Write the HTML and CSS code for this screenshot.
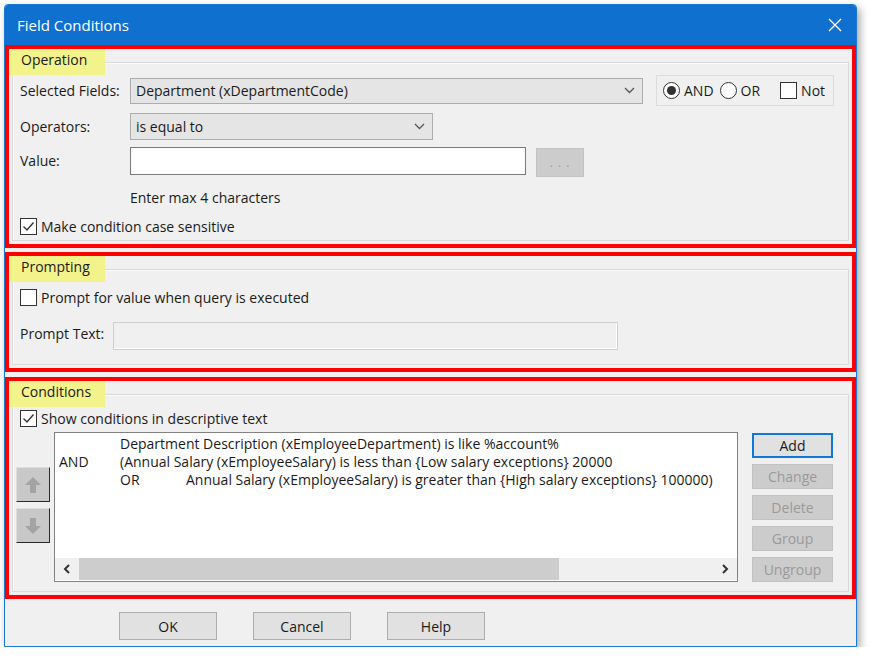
FILE: index.html
```html
<!DOCTYPE html>
<html lang="en">
<head>
  <meta charset="UTF-8" />
  <title>Field Conditions</title>
  <link rel="stylesheet" href="styles.css">
</head>
<body>
  <div class="dialog">
    <div class="titlebar">
      <span>Field Conditions</span>
      <svg class="close" width="14" height="14" viewBox="0 0 14 14">
        <path d="M1 1 L13 13 M13 1 L1 13" stroke="#fff" stroke-width="1.4" fill="none"/>
      </svg>
    </div>

    <!-- Operation -->
    <div class="mark mark-op">
      <fieldset class="group">
        <legend>Operation</legend>
        <div class="row row-fields">
          <span class="lbl">Selected Fields:</span>
          <div class="combo combo-fields">
            <span>Department (xDepartmentCode)</span>
            <svg width="11" height="7" viewBox="0 0 11 7"><polyline points="1,1 5.5,5.5 10,1" fill="none" stroke="#555" stroke-width="1.3"/></svg>
          </div>
          <div class="logic">
            <span class="radio on"></span><span class="opt">AND</span>
            <span class="radio"></span><span class="opt">OR</span>
            <span class="check not"></span><span class="opt">Not</span>
          </div>
        </div>
        <div class="row row-ops">
          <span class="lbl">Operators:</span>
          <div class="combo combo-ops">
            <span>is equal to</span>
            <svg width="11" height="7" viewBox="0 0 11 7"><polyline points="1,1 5.5,5.5 10,1" fill="none" stroke="#555" stroke-width="1.3"/></svg>
          </div>
        </div>
        <div class="row row-value">
          <span class="lbl">Value:</span>
          <div class="input input-value"></div>
          <button class="btn-dots">. . .</button>
        </div>
        <div class="hint">Enter max 4 characters</div>
        <div class="row row-check row-case">
          <span class="check">
            <svg width="15" height="15" viewBox="0 0 15 15"><polyline points="2.5,7.5 6,11 12.5,3.5" fill="none" stroke="#333" stroke-width="1.4"/></svg>
          </span>
          <span>Make condition case sensitive</span>
        </div>
      </fieldset>
    </div>

    <!-- Prompting -->
    <div class="mark mark-prompt">
      <fieldset class="group">
        <legend>Prompting</legend>
        <div class="row row-check row-ask">
          <span class="check"></span>
          <span>Prompt for value when query is executed</span>
        </div>
        <div class="row row-prompt">
          <span class="lbl lbl-short">Prompt Text:</span>
          <div class="input input-prompt"></div>
        </div>
      </fieldset>
    </div>

    <!-- Conditions -->
    <div class="mark mark-cond">
      <fieldset class="group">
        <legend>Conditions</legend>
        <div class="row row-check row-show">
          <span class="check">
            <svg width="15" height="15" viewBox="0 0 15 15"><polyline points="2.5,7.5 6,11 12.5,3.5" fill="none" stroke="#333" stroke-width="1.4"/></svg>
          </span>
          <span>Show conditions in descriptive text</span>
        </div>
        <div class="cond-area">
          <div class="movers">
            <button class="mover">
              <svg width="20" height="20" viewBox="0 0 20 20"><path d="M10 2 L18 10 L13 10 L13 18 L7 18 L7 10 L2 10 Z" fill="#a3a3a3"/></svg>
            </button>
            <button class="mover">
              <svg width="20" height="20" viewBox="0 0 20 20"><path d="M10 18 L18 10 L13 10 L13 2 L7 2 L7 10 L2 10 Z" fill="#a3a3a3"/></svg>
            </button>
          </div>
          <div class="list">
            <div class="lines">
              <div class="line"><span class="tab"></span><span>Department Description (xEmployeeDepartment) is like %account%</span></div>
              <div class="line"><span class="tab">AND</span><span>(Annual Salary (xEmployeeSalary) is less than {Low salary exceptions} 20000</span></div>
              <div class="line"><span class="tab"></span><span class="tab tab2">OR</span><span>Annual Salary (xEmployeeSalary) is greater than {High salary exceptions} 100000)</span></div>
            </div>
            <div class="hscroll">
              <span class="arrow">
                <svg width="8" height="10" viewBox="0 0 8 10"><polyline points="6,1 2,5 6,9" fill="none" stroke="#333" stroke-width="2"/></svg>
              </span>
              <div class="thumb"></div>
              <span class="spacer"></span>
              <span class="arrow">
                <svg width="8" height="10" viewBox="0 0 8 10"><polyline points="2,1 6,5 2,9" fill="none" stroke="#333" stroke-width="2"/></svg>
              </span>
            </div>
          </div>
          <div class="side">
            <button class="side-btn focus">Add</button>
            <button class="side-btn off">Change</button>
            <button class="side-btn off">Delete</button>
            <button class="side-btn off">Group</button>
            <button class="side-btn off">Ungroup</button>
          </div>
        </div>
      </fieldset>
    </div>

    <div class="footer">
      <button class="btn">OK</button>
      <button class="btn">Cancel</button>
      <button class="btn">Help</button>
    </div>
  </div>
</body>
</html>
```

FILE: styles.css
```css
* {
  box-sizing: border-box;
}
body {
  margin: 0;
  background: #fff;
  font-family: "Open Sans", "Segoe UI", sans-serif;
  font-size: 14px;
  color: #1a1a1a;
}
button {
  font-family: inherit;
  font-size: 14px;
  cursor: default;
}
.dialog {
  width: 853px;
  margin: 4px 0 0 4px;
  border: 1px solid #1a78d2;
  border-radius: 4px 4px 0 0;
  background: #f0f0f0;
  box-shadow: 3px 4px 8px rgba(0,0,0,0.35);
}
.titlebar {
  height: 40px;
  background: #0f70d0;
  color: #fff;
  font-size: 15px;
  display: flex;
  align-items: center;
  justify-content: space-between;
  padding: 0 14px 0 12px;
  border-radius: 3px 3px 0 0;
}

/* red marker boxes */
.mark {
  border: 4px solid #ff0000;
}
.mark-op {
  height: 203px;
  margin-bottom: 4px;
}
.mark-prompt {
  height: 120px;
  margin-bottom: 5px;
}
.mark-cond {
  height: 222px;
}

/* group boxes */
.group {
  margin: 0 3px;
  padding: 0 7px;
  border: 1px solid #dadada;
  box-shadow: inset 1px 1px 0 #fafafa;
  height: calc(100% - 3px);
  min-width: 0;
}
.group legend {
  margin-left: -11px;
  width: 96px;
  height: 26px;
  line-height: 22px;
  padding: 0 0 4px 12px;
  background: #f3f38c;
}

.row {
  display: flex;
  align-items: center;
}
.lbl {
  width: 110px;
  flex: none;
}
.lbl-short {
  width: 93px;
  margin-top: -5px;
}
.row-fields {
  height: 31px;
}
.row-ops {
  margin-top: 7px;
  height: 27px;
}
.row-value {
  margin-top: 7px;
  height: 28px;
}
.row-value .lbl {
  margin-top: -2px;
}
.hint {
  margin: 13px 0 0 110px;
  line-height: 20px;
}
.row-check {
  height: 20px;
  gap: 4px;
}
.row-case {
  margin-top: 8px;
}
.row-ask {
  margin-top: 5px;
}
.row-show {
  margin-top: 1px;
}
.row-prompt {
  margin-top: 15px;
  height: 28px;
}

/* controls */
.combo {
  height: 26px;
  background: #e5e5e5;
  border: 1px solid #adadad;
  display: flex;
  align-items: center;
  justify-content: space-between;
  padding: 0 7px 0 5px;
}
.combo-fields {
  width: 513px;
}
.combo-ops {
  width: 303px;
  height: 27px;
}
.logic {
  margin-left: 13px;
  width: 178px;
  height: 31px;
  border: 1px solid #dcdcdc;
  display: flex;
  align-items: center;
  padding: 0 6px;
}
.radio {
  width: 17px;
  height: 17px;
  flex: none;
  border: 1px solid #333;
  border-radius: 50%;
  background: #fff;
  display: flex;
  align-items: center;
  justify-content: center;
}
.radio.on::after {
  content: "";
  width: 9px;
  height: 9px;
  border-radius: 50%;
  background: #333;
}
.opt {
  margin: 0 6px 0 4px;
}
.check {
  width: 17px;
  height: 17px;
  flex: none;
  border: 1px solid #333;
  background: #fff;
  display: flex;
  align-items: center;
  justify-content: center;
}
.check.not {
  margin-left: 14px;
}
.input {
  height: 28px;
  background: #fff;
  border: 1px solid #7a7a7a;
}
.input-value {
  width: 396px;
}
.input-prompt {
  width: 505px;
  background: #f0f0f0;
  border: 1px solid #cfcfcf;
  box-shadow: inset -1px -1px 0 #fff;
}
.btn-dots {
  margin-left: 10px;
  width: 48px;
  height: 29px;
  margin-top: 2px;
  background: #cccccc;
  border: 1px solid #c4c4c4;
  color: #9a9a9a;
  font-size: 12px;
  letter-spacing: 1px;
}

/* conditions */
.cond-area {
  display: flex;
  align-items: flex-start;
  margin-top: 4px;
}
.movers {
  margin: 35px 4px 0 -4px;
  display: flex;
  flex-direction: column;
  gap: 6px;
}
.mover {
  width: 34px;
  height: 35px;
  padding: 0;
  background: #c8c8c8;
  border: 1px solid #dedede;
  border-right-color: #2a2a2a;
  border-bottom-color: #2a2a2a;
  display: flex;
  align-items: center;
  justify-content: center;
}
.list {
  width: 684px;
  height: 150px;
  background: #fff;
  border: 1px solid #828282;
  display: flex;
  flex-direction: column;
}
.lines {
  flex: 1;
  padding: 2px 0 0 4px;
  overflow: hidden;
}
.line {
  display: flex;
  height: 18px;
  line-height: 18px;
  white-space: nowrap;
}
.tab {
  width: 61px;
  flex: none;
}
.tab2 {
  width: 66px;
}
.hscroll {
  height: 22px;
  margin-bottom: 1px;
  background: #f0f0f0;
  display: flex;
  align-items: center;
}
.arrow {
  width: 24px;
  display: flex;
  justify-content: center;
}
.thumb {
  width: 480px;
  height: 100%;
  background: #cdcdcd;
}
.spacer {
  flex: 1;
}
.side {
  margin-left: 14px;
  padding-top: 1px;
  display: flex;
  flex-direction: column;
  gap: 6px;
}
.side-btn {
  width: 81px;
  height: 25px;
  padding: 0;
  background: #e1e1e1;
  border: 1px solid #adadad;
  color: #1a1a1a;
}
.side-btn.focus {
  border: 2px solid #0f78d7;
}
.side-btn.off {
  background: #cccccc;
  border-color: #c2c2c2;
  color: #9a9a9a;
}

.footer {
  height: 47px;
  padding: 13px 0 0 114px;
  display: flex;
  align-items: flex-start;
  gap: 36px;
}
.btn {
  width: 98px;
  height: 28px;
  background: #e1e1e1;
  border: 1px solid #adadad;
  color: #1a1a1a;
}
```
